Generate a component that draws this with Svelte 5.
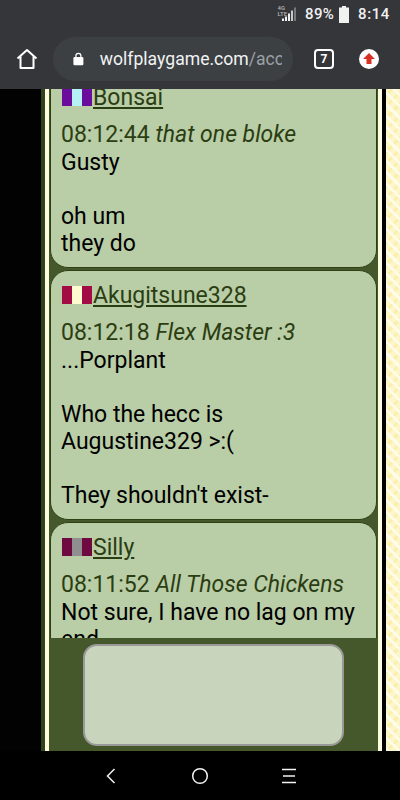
<script>
	const messages = [
		{
			name: 'Bonsai',
			flag: ['#6a0d9c', '#b5f2f5', '#6a0d9c'],
			time: '08:12:44',
			title: 'that one bloke',
			lines: ['Gusty', '', 'oh um', 'they do'],
		},
		{
			name: 'Akugitsune328',
			flag: ['#a30b45', '#fdfbd0', '#a30b45'],
			time: '08:12:18',
			title: 'Flex Master :3',
			lines: ['...Porplant', '', 'Who the hecc is', 'Augustine329 >:(', '', "They shouldn't exist-"],
		},
		{
			name: 'Silly',
			flag: ['#6e0a40', '#8f8f8f', '#6e0a40'],
			time: '08:11:52',
			title: 'All Those Chickens',
			lines: ['Not sure, I have no lag on my', 'end'],
		},
	];
</script>

<div class="phone">
	<div class="status">
		<span class="net">4G<br />LTE</span>
		<svg class="signal" width="16" height="16" viewBox="0 0 16 16">
			<path d="M2 15h2v-2.500H2zM5 15h2v-4.500H5zM8 15h2V7.500H8z" fill="#f1f1f1" />
			<path d="M11 15h2V4.500h-2z" fill="#c9c9c9" />
			<path d="M14 15h2V1.500h-2z" fill="#77797c" />
		</svg>
		<span class="pct">89%</span>
		<svg width="10" height="17" viewBox="0 0 10 17"><path d="M3 0h4v1.500h3V17H0V1.500h3z" fill="#f1f1f1" /></svg>
		<span class="clock">8:14</span>
	</div>

	<div class="toolbar">
		<svg class="home" width="22" height="22" viewBox="0 0 22 22">
			<path d="M1.500 10.500 11 2l9.500 8.500M4.500 8.500V20h13V8.500" fill="none" stroke="#fff" stroke-width="2" stroke-linejoin="round" />
		</svg>
		<div class="omnibox">
			<svg width="13" height="16" viewBox="0 0 13 16">
				<path d="M3.500 6V4.200a3 3 0 0 1 6 0V6" fill="none" stroke="#fff" stroke-width="1.500" />
				<rect x="0.500" y="5.500" width="12" height="10" rx="1.500" fill="#fff" />
			</svg>
			<div class="url"><span>wolfplaygame.com</span><span class="path">/account</span></div>
		</div>
		<div class="tabs">7</div>
		<div class="update">
			<svg width="12" height="11" viewBox="0 0 12 11"><path d="M6 0l6 6H8.500v5h-5V6H0z" fill="#d93025" /></svg>
		</div>
	</div>

	<div class="page">
		<div class="side"></div>
		<div class="frame">
			<div class="chat">
				<div class="list">
					{#each messages as msg}
						<div class="msg">
							<div class="who">
								<span class="flag">
									{#each msg.flag as c}
										<i style="background: {c}"></i>
									{/each}
								</span><a href="#top">{msg.name}</a>
							</div>
							<div class="meta">{msg.time} <em>{msg.title}</em></div>
							<div class="body">
								{#each msg.lines as line}
									<div class="line">{line}</div>
								{/each}
							</div>
						</div>
					{/each}
				</div>
			</div>
			<div class="compose">
				<textarea aria-label="Message"></textarea>
			</div>
		</div>
		<div class="pattern"></div>
	</div>

	<div class="nav">
		<svg width="12" height="16" viewBox="0 0 12 16"><path d="M9.500 1 2.500 8l7 7" fill="none" stroke="#f2f2f2" stroke-width="1.500" /></svg>
		<svg width="18" height="18" viewBox="0 0 18 18"><circle cx="9" cy="9" r="7.300" fill="none" stroke="#f2f2f2" stroke-width="1.500" /></svg>
		<svg width="16" height="16" viewBox="0 0 16 16"><path d="M1 1.500h14M2 8h12M1 14.500h14" fill="none" stroke="#f2f2f2" stroke-width="1.500" /></svg>
	</div>
</div>

<style>
	:global(body) {
		margin: 0;
		background: #000;
	}

	.phone {
		width: 400px;
		height: 800px;
		display: flex;
		flex-direction: column;
		overflow: hidden;
		font-family: Roboto, "Liberation Sans", sans-serif;
	}

	.status {
		height: 28px;
		flex: none;
		background: #35363a;
		color: #f1f1f1;
		display: flex;
		align-items: center;
		justify-content: flex-end;
		padding: 0 10px 0 0;
		font-size: 15px;
		font-weight: 500;
	}
	.signal {
		margin-right: 9px;
	}
	.net {
		margin: 0 -7px 6px 0;
		font-size: 6px;
		line-height: 6px;
		color: #b5b5b5;
	}
	.pct {
		margin-right: 5px;
		letter-spacing: 0.3px;
	}
	.clock {
		margin-left: 9px;
		letter-spacing: 0.6px;
	}

	.toolbar {
		height: 61px;
		flex: none;
		background: #35363a;
		display: flex;
		align-items: center;
		padding: 0 0 0 16px;
		box-sizing: border-box;
	}
	.home {
		flex: none;
		margin: 0 15px 0 0;
	}
	.omnibox {
		width: 240px;
		height: 44px;
		flex: none;
		box-sizing: border-box;
		border-radius: 22px;
		background: #3c4043;
		display: flex;
		align-items: center;
		padding: 0 11px 0 20px;
		gap: 14px;
	}
	.url {
		overflow: hidden;
		white-space: nowrap;
		font-size: 17.6px;
		color: #f1f3f4;
		padding-left: 2px;
	}
	.path {
		color: #9aa0a6;
	}
	.tabs {
		width: 20px;
		height: 20px;
		flex: none;
		box-sizing: border-box;
		margin-left: 21px;
		border: 2px solid #fff;
		border-radius: 4px;
		color: #fff;
		font-size: 12px;
		font-weight: 700;
		display: flex;
		align-items: center;
		justify-content: center;
	}
	.update {
		width: 20px;
		height: 20px;
		flex: none;
		margin-left: 25px;
		border-radius: 50%;
		background: #fff;
		display: flex;
		align-items: center;
		justify-content: center;
	}

	.page {
		flex: 1;
		min-height: 0;
		display: flex;
		background: #000;
	}
	.side {
		width: 41px;
		flex: none;
		background: #010201;
	}
	.frame {
		width: 341px;
		flex: none;
		box-sizing: border-box;
		border-left: 4px solid #32421c;
		display: flex;
		flex-direction: column;
		background: #fdfbe0;
		padding: 0 4px;
	}
	.chat {
		flex: 1;
		min-height: 0;
		overflow: hidden;
		background: #45582b;
	}
	.list {
		margin-top: -17px;
		display: flex;
		flex-direction: column;
		gap: 2px;
		padding: 0 1px;
	}
	.msg {
		flex: none;
		border: 1px solid #2f4015;
		border-radius: 18px;
		background: #b9cda6;
		padding: 10px 11px 10px 10px;
		color: #000;
		font-size: 23px;
		line-height: 27px;
	}
	.who {
		display: flex;
		align-items: center;
		height: 28px;
	}
	.flag {
		display: flex;
		flex: none;
		height: 18px;
		margin: 0 1px 0 1px;
	}
	.flag i {
		display: block;
		width: 10px;
	}
	a {
		color: #2b3d12;
		text-decoration: underline;
	}
	.meta {
		margin: 10px 0 1px;
		color: #2b3d12;
	}
	.line {
		min-height: 27px;
	}

	.compose {
		height: 113px;
		flex: none;
		background: #45582b;
		display: flex;
		justify-content: center;
		align-items: flex-start;
		padding: 6px 0 0;
		box-sizing: border-box;
	}
	textarea {
		width: 261px;
		height: 102px;
		box-sizing: border-box;
		margin: 0;
		border: 2px solid #999;
		border-radius: 14px;
		background: #c8d5bc;
		outline: none;
		resize: none;
	}

	.pattern {
		flex: 1;
		border-left: 4px solid #000;
		background-color: #fdf6c9;
		background-image: repeating-linear-gradient(45deg, #fefbe6 0 3px, transparent 3px 8px), repeating-linear-gradient(-45deg, #fbefb0 0 3px, transparent 3px 8px);
	}

	.nav {
		height: 49px;
		flex: none;
		background: #000;
		display: flex;
		align-items: center;
		justify-content: center;
		padding-left: 2px;
	}
	.nav svg:nth-child(1) {
		margin-right: 74px;
	}
	.nav svg:nth-child(3) {
		margin-left: 72px;
	}
</style>
